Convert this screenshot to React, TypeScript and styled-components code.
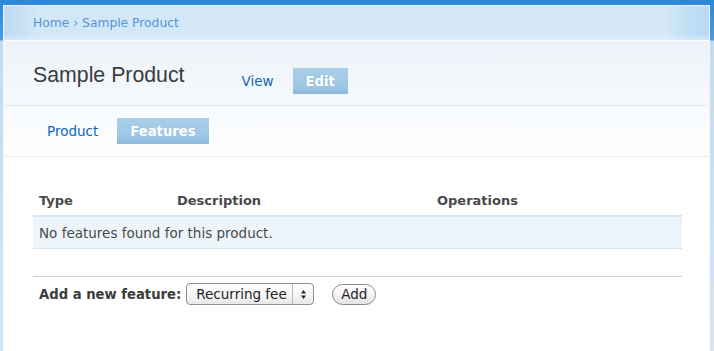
import React from "react";
import styled, { createGlobalStyle } from "styled-components";

const GlobalStyle = createGlobalStyle`
  html, body { margin: 0; padding: 0; }
  body {
    font-family: "DejaVu Sans", Verdana, sans-serif;
    font-size: 13px;
    color: #494949;
    background: #fff;
  }
`;

const Page = styled.div`
  min-height: 351px;
  box-sizing: border-box;
  padding: 5px 4px 0 3px;
  background: linear-gradient(
    to bottom,
    #2c87d8 0,
    #4a9ce0 40px,
    #c2dbee 41px,
    #d6e6f3 351px
  );
`;

const Container = styled.div`
  background: #fff;
  min-height: 346px;
  border-left: 1px solid #f2f8fd;
  border-right: 1px solid #f2f8fd;
  box-sizing: border-box;
`;

const Breadcrumb = styled.div`
  height: 35px;
  box-sizing: border-box;
  border-top: 1px solid #e9f3fb;
  padding-left: 29px;
  display: flex;
  align-items: center;
  background:
    linear-gradient(to bottom, rgba(255,255,255,0) 0, rgba(255,255,255,0) 28px, rgba(235,244,252,0.6) 35px),
    linear-gradient(to right, #bcdaf2 0, #d3e8f7 35px, #d5e9f7 calc(100% - 45px), #c0def5 calc(100% - 20px), #b9daf4 100%);
  font-size: 12.3px;
  color: #5594d6;
  a { color: #5594d6; text-decoration: none; }
`;

const Header = styled.div`
  height: 66px;
  box-sizing: border-box;
  border-top: 1px solid #fbfdff;
  border-bottom: 1px solid #e3ebf2;
  background: linear-gradient(to bottom, #edf3fa 0, #f6f9fc 100%);
  display: flex;
  align-items: flex-start;
  padding-left: 29px;
`;

const Title = styled.h1`
  margin: 21px 0 0 0;
  font-family: "Liberation Sans", Arial, sans-serif;
  font-weight: normal;
  font-size: 21.3px;
  line-height: 26px;
  color: #3b3b3b;
`;

const Tabs = styled.ul<{ $top: number; $left: number }>`
  list-style: none;
  margin: ${(p) => p.$top}px 0 0 ${(p) => p.$left}px;
  padding: 0;
  display: flex;
  gap: 6px;
`;

const Tab = styled.li<{ $active?: boolean }>`
  height: 26px;
  box-sizing: border-box;
  padding: 0 13px;
  display: flex;
  align-items: center;
  font-size: 13.5px;
  ${(p) =>
    p.$active
      ? `
    background: linear-gradient(to bottom, #a9cfe9 0, #9fc7e4 70%, #8ab8dc 100%);
    color: #fff;
    font-weight: bold;
    font-size: 13.2px;
    text-shadow: 0 0 1px rgba(120,170,210,0.6);
  `
      : `
    color: #0d68b4;
  `}
`;

const SubTabsRow = styled.div`
  height: 51px;
  box-sizing: border-box;
  border-bottom: 1px solid #e8ecef;
  background: linear-gradient(to bottom, #f7fafd 0, #fdfeff 100%);
  display: flex;
  align-items: flex-start;
  padding-left: 30px;
`;

const Main = styled.div`
  padding: 28px 27px 0 29px;
`;

const Table = styled.table`
  width: 100%;
  border-collapse: collapse;
  font-size: 13px;
`;

const Th = styled.th`
  text-align: left;
  font-weight: bold;
  color: #494949;
  padding: 0 6px;
  height: 30px;
  vertical-align: middle;
  border-bottom: 2px solid #d4e7f5;
`;

const Td = styled.td`
  padding: 0 6px;
  height: 31px;
  background: #edf5fa;
  border-bottom: 1px solid #d3e7f4;
  color: #494949;
  font-size: 13.5px;
`;

const Rule = styled.hr`
  border: 0;
  border-top: 1px solid #cfcfcf;
  margin: 27px 0 0 0;
`;

const FormRow = styled.div`
  display: flex;
  align-items: center;
  padding: 4px 0 0 6px;
  height: 26px;
`;

const Label = styled.label`
  font-weight: bold;
  font-size: 13.2px;
  color: #3c3c3c;
  margin-right: 5px;
`;

const SelectWrap = styled.span`
  position: relative;
  display: inline-flex;
`;

const Select = styled.select`
  appearance: none;
  -webkit-appearance: none;
  font-family: "DejaVu Sans", Verdana, sans-serif;
  font-size: 13.5px;
  color: #222;
  height: 22px;
  width: 128px;
  padding: 0 0 0 9px;
  border: 1px solid #8f8f8f;
  border-radius: 4px;
  background: linear-gradient(to bottom, #ffffff 0, #f4f4f4 60%, #e8e8e8 100%);
  outline: none;
`;

const Arrows = styled.span`
  position: absolute;
  right: 1px;
  top: 1px;
  bottom: 1px;
  width: 20px;
  border-left: 1px solid #b8b8b8;
  display: flex;
  align-items: center;
  justify-content: center;
  pointer-events: none;
`;

const Button = styled.button`
  margin-left: 18px;
  font-family: "DejaVu Sans", Verdana, sans-serif;
  font-size: 13.5px;
  color: #222;
  height: 21px;
  padding: 0 8px;
  border: 1px solid #8a8a8a;
  border-radius: 11px;
  background: linear-gradient(to bottom, #ffffff 0, #f3f3f3 55%, #e4e4e4 100%);
`;

export default function App() {
  return (
    <>
      <GlobalStyle />
      <Page>
        <Container>
          <Breadcrumb>
            <a href="#">Home</a>&nbsp;›&nbsp;<a href="#">Sample Product</a>
          </Breadcrumb>
          <Header>
            <Title>Sample Product</Title>
            <Tabs $top={27} $left={44}>
              <Tab>View</Tab>
              <Tab $active>Edit</Tab>
            </Tabs>
          </Header>
          <SubTabsRow>
            <Tabs $top={12} $left={0}>
              <Tab>Product</Tab>
              <Tab $active>Features</Tab>
            </Tabs>
          </SubTabsRow>
          <Main>
            <Table>
              <thead>
                <tr>
                  <Th style={{ width: 126 }}>Type</Th>
                  <Th style={{ width: 248 }}>Description</Th>
                  <Th>Operations</Th>
                </tr>
              </thead>
              <tbody>
                <tr>
                  <Td colSpan={3}>No features found for this product.</Td>
                </tr>
              </tbody>
            </Table>
            <Rule />
            <FormRow>
              <Label>Add a new feature:</Label>
              <SelectWrap>
                <Select defaultValue="recurring">
                  <option value="recurring">Recurring fee</option>
                </Select>
                <Arrows>
                  <svg width="7" height="11" viewBox="0 0 7 11">
                    <path d="M3.5 1 L6 4.5 L1 4.5 Z" fill="#222" />
                    <path d="M3.5 10 L6 6.5 L1 6.5 Z" fill="#222" />
                  </svg>
                </Arrows>
              </SelectWrap>
              <Button>Add</Button>
            </FormRow>
          </Main>
        </Container>
      </Page>
    </>
  );
}
